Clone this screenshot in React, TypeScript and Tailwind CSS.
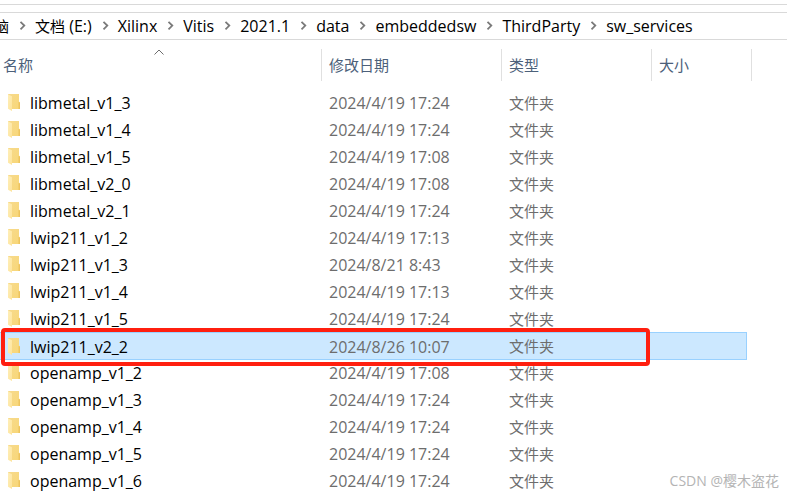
import { useState } from 'react'

type Entry = { name: string; date: string }

const crumbs = ['Xilinx', 'Vitis', '2021.1', 'data', 'embeddedsw', 'ThirdParty', 'sw_services']

const entries: Entry[] = [
  { name: 'libmetal_v1_3', date: '2024/4/19 17:24' },
  { name: 'libmetal_v1_4', date: '2024/4/19 17:24' },
  { name: 'libmetal_v1_5', date: '2024/4/19 17:08' },
  { name: 'libmetal_v2_0', date: '2024/4/19 17:08' },
  { name: 'libmetal_v2_1', date: '2024/4/19 17:24' },
  { name: 'lwip211_v1_2', date: '2024/4/19 17:13' },
  { name: 'lwip211_v1_3', date: '2024/8/21 8:43' },
  { name: 'lwip211_v1_4', date: '2024/4/19 17:13' },
  { name: 'lwip211_v1_5', date: '2024/4/19 17:24' },
  { name: 'lwip211_v2_2', date: '2024/8/26 10:07' },
  { name: 'openamp_v1_2', date: '2024/4/19 17:08' },
  { name: 'openamp_v1_3', date: '2024/4/19 17:24' },
  { name: 'openamp_v1_4', date: '2024/4/19 17:24' },
  { name: 'openamp_v1_5', date: '2024/4/19 17:24' },
  { name: 'openamp_v1_6', date: '2024/4/19 17:24' },
]

function Chevron() {
  return <svg className="w-[26px] h-3 shrink-0" viewBox="0 0 26 12" fill="none" stroke="#7a7a7a" strokeWidth="1.8">
    <path d="M11.5 1.8 L15.3 5.6 L11.5 9.4" />
  </svg>
}

function FolderIcon() {
  return <svg className="w-3 h-[17px] shrink-0" viewBox="0 0 12 17">
    <defs>
      <linearGradient id="folder-back" x1="0" y1="0" x2="1" y2="1">
        <stop offset="0" stopColor="#f7da8c" />
        <stop offset="1" stopColor="#f8d778" />
      </linearGradient>
      <linearGradient id="folder-front" x1="0" y1="0" x2="1" y2="1">
        <stop offset="0" stopColor="#ffefb9" />
        <stop offset="1" stopColor="#fde39a" />
      </linearGradient>
    </defs>
    <path d="M0 0 H11 V7.5 L12 8.5 V15 H3 Z" fill="url(#folder-back)" />
    <path d="M10.5 8 L12 8.6 V15 H10.5 Z" fill="#edc45f" />
    <path d="M0 0.5 L4 2.3 V17 L0 14.8 Z" fill="url(#folder-front)" />
  </svg>
}

function HeaderCell({ label, sorted }: { label: string; sorted?: boolean }) {
  return <th className="p-0 pt-[9px] pb-2 font-normal text-left" aria-sort={sorted ? 'ascending' : undefined}>
    <div className={`relative flex items-center h-8 border-r border-[#e0e0e0] text-[15px] text-[#4c607a] ${sorted ? 'pl-[3px]' : 'pl-[7px]'}`}>
      <button type="button">{label}</button>
      {sorted && <svg className="absolute inset-x-0 top-0 mx-auto w-4 h-2" viewBox="0 0 16 8" fill="none" stroke="#6d6d6d">
        <path d="M1.5 5.5 L6 1 L10.5 5.5" />
      </svg>}
    </div>
  </th>
}

export default function App() {
  const [selected, setSelected] = useState('lwip211_v2_2')

  return <div className="relative min-h-screen overflow-hidden bg-white font-['Open_Sans','Noto_Sans_CJK_SC',sans-serif]">
    <div className="h-[5px] border-b border-[#d9d9d9]" />
    <nav aria-label="路径" className="mt-[7px] h-7 flex items-center border-y border-[#d9d9d9] text-base whitespace-nowrap text-black">
      <a href="#computer" className="-ml-1.5 text-[15px]">脑</a>
      <Chevron />
      <a href="#drive"><span className="text-[15px]">文档</span> (E:)</a>
      {crumbs.map(crumb => <span key={crumb} className="flex items-center">
        <Chevron />
        <a href={`#${crumb}`}>{crumb}</a>
      </span>)}
    </nav>

    <table className="w-[752px] table-fixed border-separate border-spacing-0">
      <colgroup>
        <col className="w-[322px]" />
        <col className="w-[180px]" />
        <col className="w-[150px]" />
        <col className="w-[100px]" />
      </colgroup>
      <thead>
        <tr>
          <HeaderCell label="名称" sorted />
          <HeaderCell label="修改日期" />
          <HeaderCell label="类型" />
          <HeaderCell label="大小" />
        </tr>
      </thead>
      <tbody>
        {entries.map(entry => {
          const active = entry.name === selected
          const cell = active ? 'flex items-center h-7 -mb-px border-y border-[#99d1ff] bg-[#cce8ff]' : 'flex items-center h-[27px]'
          return <tr key={entry.name} onClick={() => setSelected(entry.name)}>
            <td className="relative p-0">
              <div className={`${cell} pl-2 gap-[10px] text-base text-black`}>
                <FolderIcon />
                <span className="pt-px">{entry.name}</span>
              </div>
              {active && <div className="absolute z-10 left-px -top-1 w-[649px] h-[38px] border-4 border-[#ff1f0f] rounded pointer-events-none" />}
            </td>
            <td className="p-0"><div className={`${cell} pt-px pl-[7px] text-base text-[#6d6d6d]`}>{entry.date}</div></td>
            <td className="p-0"><div className={`${cell} pt-px pl-[7px] text-[15px] text-[#6d6d6d]`}>文件夹</div></td>
            <td className="p-0 pr-[5px]"><div className={`${cell} ${active ? 'border-r' : ''}`} /></td>
          </tr>
        })}
      </tbody>
    </table>

    <div className="absolute right-2 bottom-1 text-sm leading-5 text-[#b4b4b4]">CSDN @樱木盗花</div>
  </div>
}
